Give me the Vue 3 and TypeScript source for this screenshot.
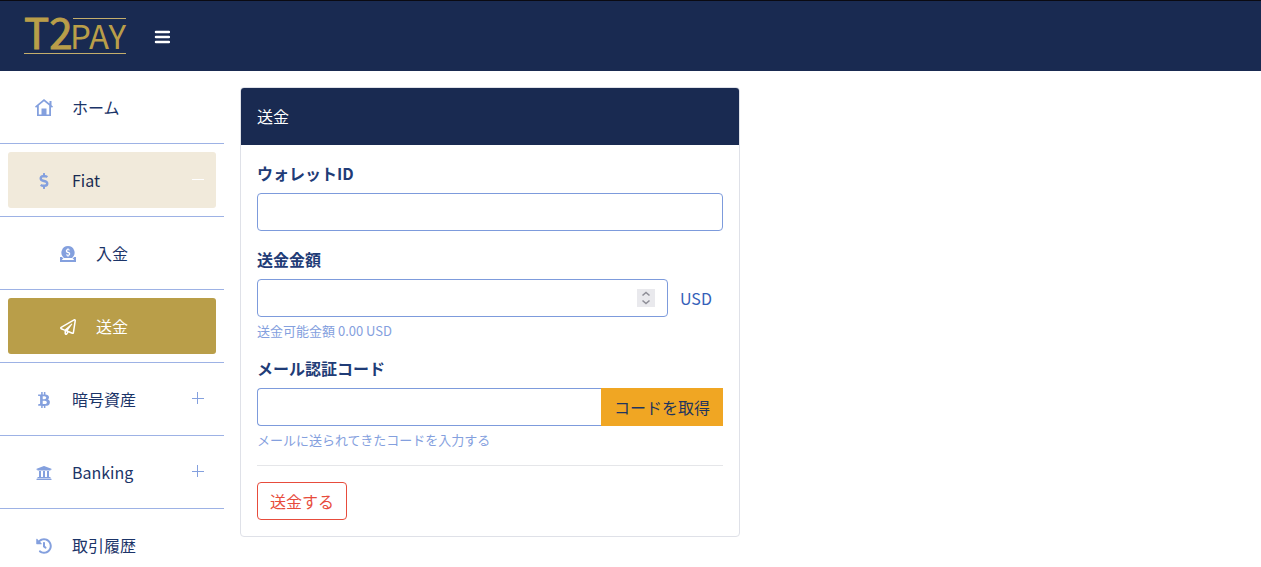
<script setup lang="ts">
import { ref } from 'vue'

interface NavItem {
  label: string
  icon: string
  box: string
  sub?: boolean
  state?: 'open' | 'current'
  toggle?: 'plus' | 'minus'
}

const walletId = ref('')
const amount = ref('')
const mailCode = ref('')

const items: NavItem[] = [
  {
    label: 'ホーム',
    box: '0 0 18 18',
    icon: 'M9 0L0 7.500l1 1.200L2 8V17h14V8l1 .7 1-1.200L16.500 6.200V2h-2v2.600zM9 2.200l5.200 4.300V15.500H11.500V9.500h-5v6H3.800v-9z',
  },
  {
    label: 'Fiat',
    box: '-112 0 512 512',
    state: 'open',
    toggle: 'minus',
    icon: 'M209.200 233.400l-108-31.600C88.700 198.200 80 186.500 80 173.500c0-16.300 13.200-29.500 29.500-29.500h66.300c12.200 0 24.200 3.700 34.200 10.500 6.100 4.100 14.300 3.100 19.500-2l34.800-34c7.100-6.900 6.100-18.400-1.800-24.500C238 74.800 207.400 64.100 176 64V16c0-8.800-7.200-16-16-16h-32c-8.800 0-16 7.200-16 16v48h-2.500C45.800 64-5.400 118.700.5 183.600c4.200 46.100 39.400 83.600 83.800 96.600l102.500 30c12.500 3.700 21.200 15.300 21.200 28.300 0 16.300-13.200 29.500-29.500 29.500h-66.300C100 368 88 364.300 78 357.500c-6.100-4.100-14.300-3.100-19.500 2l-34.800 34c-7.100 6.900-6.100 18.400 1.800 24.500 24.500 19.200 55.100 29.900 86.500 30v48c0 8.800 7.200 16 16 16h32c8.800 0 16-7.200 16-16v-48.200c46.600-.9 90.300-28.600 105.700-72.700 21.500-61.600-14.600-124.800-72.500-141.700z',
  },
  {
    label: '入金',
    box: '0 0 16 16',
    sub: true,
    icon: 'M8 0a6.600 6.600 0 0 1 4.500 11.400l-.4.6H3.900l-.4-.6A6.600 6.600 0 0 1 8 0zM7.500 2.200v.9C5.400 3.400 5.200 6.300 7.300 6.900l1.100.3c1 .4.7 1.500-.3 1.500-.6 0-1.100-.2-1.500-.5l-.7.9c.5.4 1 .6 1.600.7v.9h1v-.9c2.200-.4 2.300-3.200.3-3.800l-1.200-.4c-.9-.3-.7-1.300.3-1.300.5 0 .9.100 1.300.4l.7-.9c-.4-.3-.9-.5-1.400-.6v-1zM0 11h2l1.400 2H2.200v1h11.600v-1h-1.200L14 11h2v5H0z',
  },
  {
    label: '送金',
    box: '0 0 512 512',
    sub: true,
    state: 'current',
    icon: 'M440 6.500L24 246.400c-34.400 19.900-31.100 70.800 5.700 85.900L144 379.600V464c0 46.400 59.200 65.500 86.600 28.600l43.800-59.100 111.900 46.200c5.900 2.400 12.100 3.600 18.300 3.600 8.200 0 16.300-2.100 23.600-6.200 12.800-7.200 21.600-20 23.900-34.500l59.400-387.200c6.100-40.100-36.900-68.800-71.500-48.900zM192 464v-64.600l36.600 15.100L192 464zm212.600-28.700l-153.800-63.500L391 169.500c10.700-15.500-9.500-33.500-23.700-21.200L155.800 332.600 48 288 464 48l-59.400 387.300z',
  },
  {
    label: '暗号資産',
    box: '-64 0 512 512',
    toggle: 'plus',
    icon: 'M310.204 242.638c27.730-14.180 45.377-39.390 41.280-81.300-5.358-57.351-52.458-76.573-114.850-81.929V0h-48.528v77.203c-12.605 0-25.525.315-38.444.630V0h-48.530v79.409c-17.842.539-38.622.276-97.370 0v51.678c38.314-.678 58.417-3.140 63.023 21.427v217.429c-2.925 19.492-18.524 16.685-53.255 16.071L3.765 443.680c88.481 0 97.370.315 97.370.315V512h48.530v-67.060c13.234.315 26.154.315 38.444.315V512h48.528v-68.005c81.299-4.412 135.647-24.894 142.895-101.467 5.671-61.446-23.314-88.862-69.326-99.890zM150.608 134.553c27.415 0 113.126-8.507 113.126 48.528 0 54.515-85.710 48.212-113.126 48.212v-96.740zm0 251.776V279.821c32.772 0 133.127-9.138 133.127 53.255-.001 60.186-100.355 53.253-133.127 53.253z',
  },
  {
    label: 'Banking',
    box: '0 0 512 512',
    toggle: 'plus',
    icon: 'M496 128v16a8 8 0 0 1-8 8h-24v12c0 6.627-5.373 12-12 12H60c-6.627 0-12-5.373-12-12v-12H24a8 8 0 0 1-8-8v-16a8 8 0 0 1 4.941-7.392l232-88a7.996 7.996 0 0 1 6.118 0l232 88A8 8 0 0 1 496 128zm-24 304H40c-13.255 0-24 10.745-24 24v16a8 8 0 0 0 8 8h464a8 8 0 0 0 8-8v-16c0-13.255-10.745-24-24-24zM96 192v192H60c-6.627 0-12 5.373-12 12v20h416v-20c0-6.627-5.373-12-12-12h-36V192h-64v192h-64V192h-64v192h-64V192H96z',
  },
  {
    label: '取引履歴',
    box: '0 0 512 512',
    icon: 'M504 255.531c.253 136.640-111.180 248.372-247.820 248.468-59.015.042-113.223-20.530-155.822-54.911-11.077-8.940-11.905-25.541-1.839-35.607l11.267-11.267c8.609-8.609 22.353-9.551 31.891-1.984C173.062 425.135 212.781 440 256 440c101.705 0 184-82.311 184-184 0-101.705-82.311-184-184-184-48.814 0-93.149 18.969-126.068 49.932l50.754 50.754c10.080 10.080 2.941 27.314-11.313 27.314H24c-8.837 0-16-7.163-16-16V38.627c0-14.254 17.234-21.393 27.314-11.314l49.372 49.372C129.209 34.136 189.552 8 256 8c136.810 0 247.747 110.780 248 247.531zm-180.912 78.784l9.823-12.630c8.138-10.463 6.253-25.542-4.210-33.679L288 256.349V152c0-13.255-10.745-24-24-24h-16c-13.255 0-24 10.745-24 24v135.651l65.409 50.874c10.463 8.137 25.541 6.253 33.679-4.210z',
  },
]
</script>

<template>
  <div class="layout">
    <header class="topbar">
      <a class="logo" href="#" aria-label="T2PAY">
        <svg width="102" height="38" viewBox="0 0 102 38" aria-hidden="true">
          <path d="M49 1.500h53M0 36.500h102" stroke="#c4ae6c" />
          <text class="logo-main" x="0" y="32">T2</text>
          <text class="logo-sub" x="46" y="32">PAY</text>
        </svg>
      </a>
      <button class="menu" type="button" aria-label="メニュー">
        <svg width="16" height="16" viewBox="0 0 16 16" aria-hidden="true">
          <path d="M2 4h13M2 9h13M2 14h13" stroke="#fff" stroke-width="2.500" stroke-linecap="round" />
        </svg>
      </button>
    </header>

    <div class="columns">
      <nav class="sidebar">
        <ul>
          <li v-for="item in items" :key="item.label">
            <a href="#" class="nav-link" :class="[item.state, { sub: item.sub }]">
              <span class="icon">
                <svg :class="{ home: item.label === 'ホーム' }" :viewBox="item.box" aria-hidden="true">
                  <path :d="item.icon" fill="currentColor" fill-rule="evenodd" />
                </svg>
              </span>
              <span class="label">{{ item.label }}</span>
              <svg v-if="item.toggle" class="toggle" viewBox="0 0 12 16" aria-hidden="true">
                <path :d="item.toggle === 'plus' ? 'M0 7.500h12M5.500 1v12' : 'M0 7.500h12'" stroke="currentColor" />
              </svg>
            </a>
          </li>
        </ul>
      </nav>

      <main class="content">
        <section class="card">
          <h1 class="card-title">送金</h1>
          <form class="card-body" @submit.prevent>
            <div class="field">
              <label for="wallet">ウォレットID</label>
              <input id="wallet" v-model="walletId" type="text" />
            </div>
            <div class="field">
              <label for="amount">送金金額</label>
              <div class="group">
                <input id="amount" v-model="amount" type="number" />
                <span class="unit">USD</span>
              </div>
              <small>送金可能金額 0.00 USD</small>
            </div>
            <div class="field">
              <label for="code">メール認証コード</label>
              <div class="group">
                <input id="code" v-model="mailCode" class="joined" type="text" />
                <button class="get-code" type="button">コードを取得</button>
              </div>
              <small>メールに送られてきたコードを入力する</small>
            </div>
            <hr />
            <button class="submit" type="submit">送金する</button>
          </form>
        </section>
      </main>
    </div>
  </div>
</template>

<style>
body {
  margin: 0;
  background: #fff;
}
</style>

<style scoped>
.layout,
.layout * {
  box-sizing: border-box;
}
.layout {
  display: flex;
  flex-direction: column;
  height: 100vh;
  font-family: "Noto Sans CJK JP", sans-serif;
  font-size: 16px;
  line-height: 24px;
  color: #1b3468;
}
.topbar {
  display: flex;
  flex: none;
  align-items: center;
  gap: 28px;
  height: 71px;
  padding: 0 24px;
  border-top: 1px solid #0a0a12;
  background: #192a51;
}
.logo {
  display: flex;
}
.logo svg {
  overflow: visible;
}
.logo text {
  fill: #b99e49;
}
.logo-main {
  font-size: 42px;
  font-weight: 400;
  stroke: #b99e49;
  stroke-width: 1;
}
.logo-sub {
  font-size: 33px;
  font-weight: 400;
}
.menu {
  display: flex;
  padding: 0;
  border: 0;
  background: none;
}
.columns {
  display: flex;
  flex: 1;
  min-height: 0;
}
.sidebar {
  flex: none;
  width: 224px;
  overflow-y: auto;
  scrollbar-width: none;
}
ul {
  margin: 0;
  padding: 0;
  list-style: none;
}
li {
  padding: 8px;
  border-bottom: 1px solid #9db2e5;
}
.nav-link {
  display: flex;
  align-items: center;
  height: 56px;
  padding: 0 12px 0 24px;
  border-radius: 3px;
  color: #1b3468;
  text-decoration: none;
}
.nav-link.sub {
  padding-left: 48px;
}
.nav-link.open {
  background: #f1eadb;
  color: #192a51;
}
.nav-link.current {
  background: #b99e49;
  color: #fff;
}
.icon {
  display: flex;
  justify-content: center;
  width: 24px;
  margin-right: 16px;
  padding-top: 2px;
  color: #84a0de;
}
.icon svg {
  width: 16px;
  height: 16px;
}
.icon .home {
  width: 18px;
  height: 18px;
}
.current .icon {
  color: #fff;
}
.label {
  flex: 1;
}
.toggle {
  width: 12px;
  height: 16px;
  color: #84a0de;
}
.open .toggle {
  color: #fff;
}
.content {
  flex: 1;
  min-width: 0;
  padding: 16px;
}
.card {
  max-width: 500px;
  border: 1px solid #dfe1e8;
  border-radius: 4px;
  background: #fff;
}
.card-title {
  margin: 0;
  padding: 16px 16px 17px;
  border-radius: 3px 3px 0 0;
  background: #192a51;
  color: #fff;
  font-size: 16px;
  font-weight: 400;
}
.card-body {
  padding: 16px;
}
.field {
  margin-bottom: 16px;
}
.field label {
  display: block;
  margin-bottom: 8px;
  color: #1f3c77;
  font-weight: 700;
}
input {
  display: block;
  width: 100%;
  height: 38px;
  padding: 6px 12px;
  border: 1px solid #7d9bdc;
  border-radius: 4px;
  background: #fff;
  color: #1b3468;
  font: inherit;
}
input[type="number"]::-webkit-inner-spin-button {
  appearance: none;
  width: 18px;
  height: 24px;
  margin: 0;
  opacity: 1;
  background: url("data:image/svg+xml,%3Csvg xmlns='http://www.w3.org/2000/svg' viewBox='0 0 18 18' fill='none' stroke='%238f8f98' stroke-width='1.6'%3E%3Cpath fill='%23e9e9ed' stroke='none' d='M0 0h18v18H0z'/%3E%3Cpath d='M5.500 6.500L9 3.500l3.500 3M5.500 11.500l3.500 3 3.500-3'/%3E%3C/svg%3E") center / 18px 18px no-repeat;
}
.group {
  display: flex;
}
.group input {
  flex: 1;
  min-width: 0;
}
.group .joined {
  border-right: 0;
  border-radius: 4px 0 0 4px;
}
.unit {
  width: 55px;
  padding: 7px 0 7px 12px;
  color: #3560b9;
}
small {
  display: block;
  margin-top: 4px;
  color: #84a0de;
  font-size: 13px;
  line-height: 19px;
}
.get-code,
.submit {
  height: 38px;
  padding: 0 12px;
  font: inherit;
}
.get-code {
  border: 1px solid #f0a623;
  background: #f0a623;
  color: #1f355f;
}
hr {
  margin: 0 0 16px;
  border: 0;
  border-top: 1px solid #e5e6e9;
}
.submit {
  border: 1px solid #e74c3c;
  border-radius: 4px;
  background: #fff;
  color: #e74c3c;
}
</style>
